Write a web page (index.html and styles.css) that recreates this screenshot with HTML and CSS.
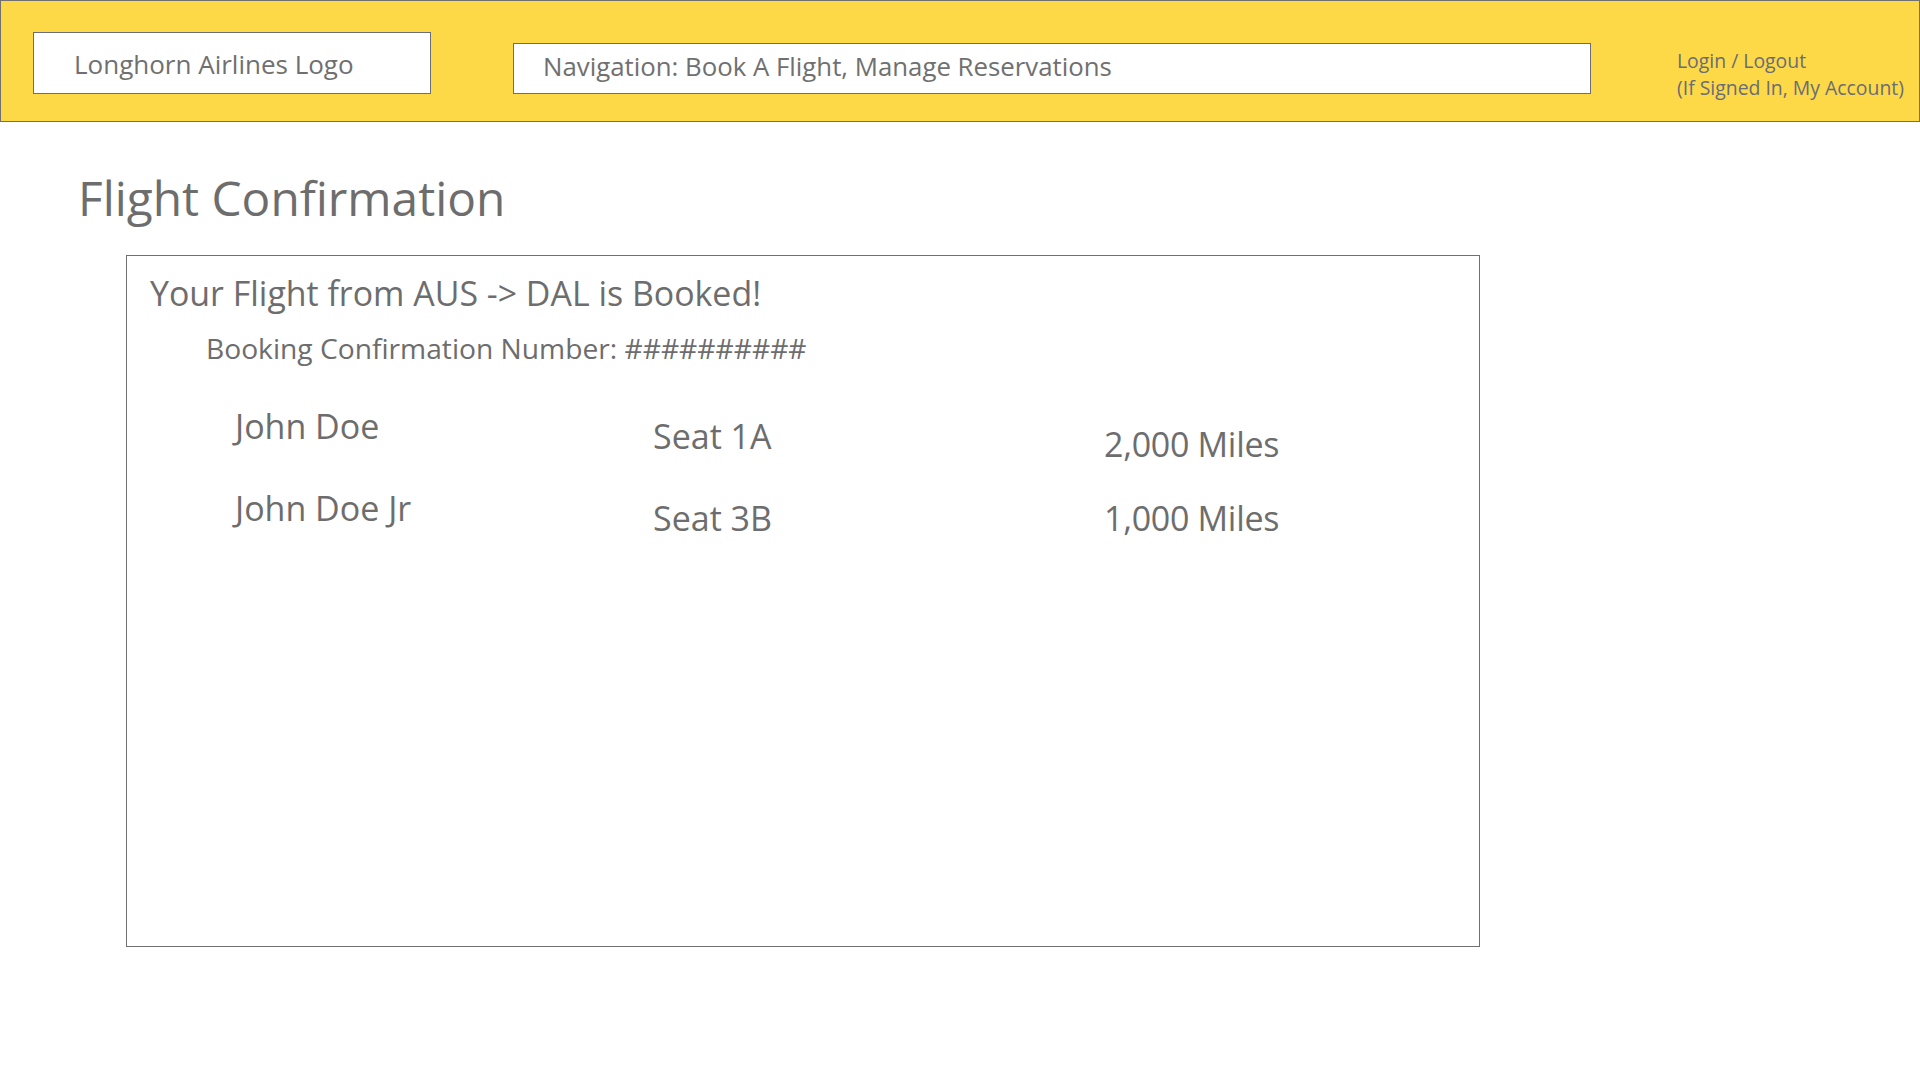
FILE: index.html
```html
<!DOCTYPE html>
<html lang="en">
<head>
<meta charset="utf-8">
<title>Flight Confirmation</title>
<link rel="stylesheet" href="styles.css">
</head>
<body>
<header class="topbar">
  <div class="logo-box">Longhorn Airlines Logo</div>
  <nav class="nav-box">Navigation: Book A Flight, Manage Reservations</nav>
  <div class="account">
    <div>Login / Logout</div>
    <div>(If Signed In, My Account)</div>
  </div>
</header>
<main class="main">
  <h1 class="page-title">Flight Confirmation</h1>
  <section class="confirm-box">
    <h2 class="confirm-heading">Your Flight from AUS -&gt; DAL is Booked!</h2>
    <p class="confirm-number">Booking Confirmation Number: ##########</p>
    <div class="passengers">
      <div class="cell name">John Doe</div>
      <div class="cell seat">Seat 1A</div>
      <div class="cell miles miles-low">2,000 Miles</div>
      <div class="cell name">John Doe Jr</div>
      <div class="cell seat">Seat 3B</div>
      <div class="cell miles">1,000 Miles</div>
    </div>
  </section>
</main>
</body>
</html>
```
FILE: styles.css
```css
html, body {
  margin: 0;
  padding: 0;
  background: #ffffff;
}
body {
  font-family: "Open Sans", "Noto Sans", sans-serif;
  color: #6d6d6d;
  width: 1920px;
  height: 1080px;
  overflow: hidden;
}
.topbar {
  box-sizing: border-box;
  height: 122px;
  background: #fdd947;
  border: 1px solid #707070;
  display: flex;
  align-items: flex-end;
  padding: 0 0 27px 32px;
}
.logo-box {
  box-sizing: border-box;
  width: 398px;
  height: 62px;
  background: #ffffff;
  border: 1px solid #6b6e7a;
  display: flex;
  align-items: center;
  padding: 2px 0 0 40px;
  font-size: 26px;
  color: #707070;
}
.nav-box {
  box-sizing: border-box;
  margin-left: 82px;
  width: 1078px;
  height: 51px;
  background: #ffffff;
  border: 1px solid #6b6e7a;
  display: flex;
  align-items: center;
  padding: 0 0 5px 29px;
  font-size: 25.8px;
  color: #707070;
}
.account {
  align-self: flex-start;
  margin-top: 46px;
  margin-left: 86px;
  font-size: 19.4px;
  line-height: 27px;
  color: #6a6c78;
  white-space: nowrap;
}
.main {
  padding-left: 78px;
}
.page-title {
  margin: 48px 0 0 0;
  font-size: 47.8px;
  line-height: 56px;
  font-weight: 400;
}
.confirm-box {
  box-sizing: border-box;
  margin: 29px 0 0 48px;
  width: 1354px;
  height: 692px;
  border: 1px solid #707070;
  padding: 15px 0 0 23px;
}
.confirm-heading {
  margin: 0;
  font-size: 33.9px;
  line-height: 44px;
  font-weight: 400;
}
.confirm-number {
  margin: 15px 0 0 56px;
  font-size: 28.2px;
  line-height: 36px;
}
.passengers {
  margin: 40px 0 0 85px;
  display: grid;
  grid-template-columns: 418px 451px 1fr;
  grid-auto-rows: 82px;
  font-size: 34px;
  line-height: 40px;
}
.seat,
.miles {
  padding-top: 10px;
}
.miles-low {
  padding-top: 18px;
}
.miles {
  letter-spacing: -0.3px;
}
```
